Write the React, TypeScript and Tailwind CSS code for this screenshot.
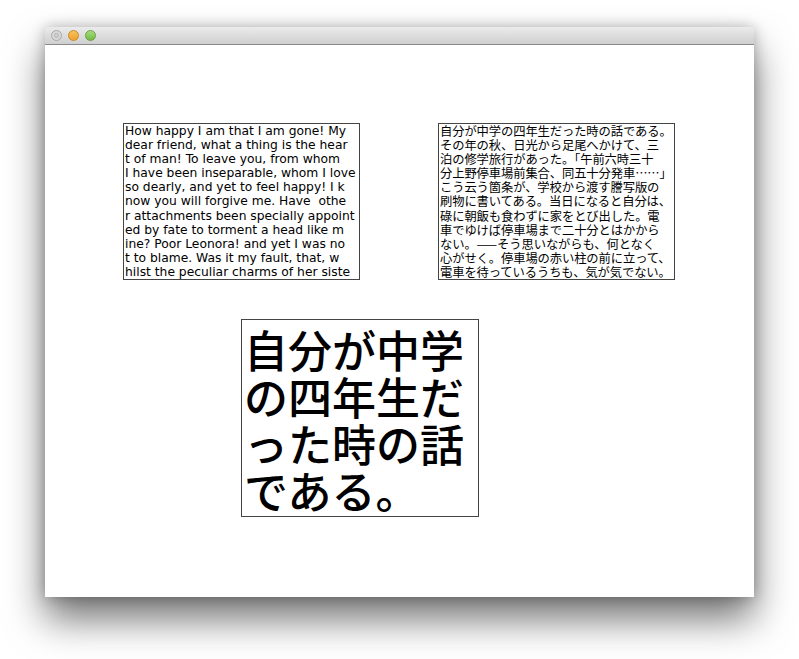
import React from "react";

const en = [
  "How happy I am that I am gone! My",
  "dear friend, what a thing is the hear",
  "t of man! To leave you, from whom",
  "I have been inseparable, whom I love",
  "so dearly, and yet to feel happy! I k",
  "now you will forgive me. Have  othe",
  "r attachments been specially appoint",
  "ed by fate to torment a head like m",
  "ine? Poor Leonora! and yet I was no",
  "t to blame. Was it my fault, that, w",
  "hilst the peculiar charms of her siste",
];

const ja = [
  "自分が中学の四年生だった時の話である。",
  "その年の秋、日光から足尾へかけて、三",
  "泊の修学旅行があった。「午前六時三十",
  "分上野停車場前集合、同五十分発車……」",
  "こう云う箇条が、学校から渡す謄写版の",
  "刷物に書いてある。当日になると自分は、",
  "碌に朝飯も食わずに家をとび出した。電",
  "車でゆけば停車場まで二十分とはかから",
  "ない。——そう思いながらも、何となく",
  "心がせく。停車場の赤い柱の前に立って、",
  "電車を待っているうちも、気が気でない。",
];

const big = ["自分が中学", "の四年生だ", "った時の話", "である。"];

export default function App() {
  return (
    <div className="w-[799px] h-[659px] bg-white pl-[45px] pt-[27px] overflow-hidden">
      <div className="w-[709px] h-[570px] flex flex-col bg-white rounded-t-[4px] shadow-[0_22px_38px_rgba(0,0,0,0.55),0_0_14px_rgba(0,0,0,0.25)]">
        <div className="h-[18px] flex items-center gap-[6px] pl-[6px] rounded-t-[4px] border-b border-[#8a8a8a] bg-gradient-to-b from-[#ebebeb] to-[#cfcfcf]">
          <div className="w-[11px] h-[11px] rounded-full border border-[#a9a9a9] bg-[#d8d8d8] flex items-center justify-center">
            <div className="w-[5px] h-[5px] rounded-full border border-[#b5b5b5] bg-[#cfcfcf]" />
          </div>
          <div className="w-[11px] h-[11px] rounded-full border border-[#c9872a] bg-gradient-to-b from-[#f8c45a] to-[#eea22c]" />
          <div className="w-[11px] h-[11px] rounded-full border border-[#6b9e45] bg-gradient-to-b from-[#a9dc7c] to-[#6fbb45]" />
        </div>
        <div className="flex-1 bg-white pt-[78px]">
          <div className="flex pl-[78px] gap-[78px]">
            <div className="w-[237px] h-[157px] border border-[#444] overflow-hidden px-[1px] text-black text-[12.3px] leading-[14.1px] font-['DejaVu_Sans','Liberation_Sans',sans-serif]">
              {en.map((l, i) => (
                <div key={i} className="whitespace-pre">{l}</div>
              ))}
            </div>
            <div className="w-[237px] h-[157px] border border-[#444] overflow-hidden px-[1px] text-black text-[12.3px] leading-[14.1px] font-['Noto_Sans_CJK_JP',sans-serif]">
              {ja.map((l, i) => (
                <div key={i} className="whitespace-pre tracking-[-0.1px]">{l}</div>
              ))}
            </div>
          </div>
          <div className="mt-[39px] ml-[196px] w-[238px] h-[198px] border border-[#444] overflow-hidden pl-[2px] pt-[6px] text-black text-[44px] leading-[47px] font-medium font-['Noto_Sans_CJK_JP',sans-serif]">
            {big.map((l, i) => (
              <div key={i} className="whitespace-pre">{l}</div>
            ))}
          </div>
        </div>
      </div>
    </div>
  );
}
